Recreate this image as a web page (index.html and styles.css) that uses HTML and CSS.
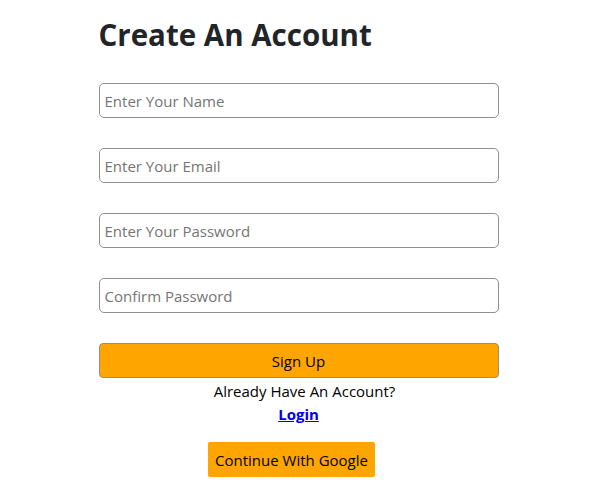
FILE: index.html
```html
<!DOCTYPE html>
<html>
<head>
<meta charset="utf-8">
<link rel="stylesheet" href="styles.css">
</head>
<body>
<main class="form">
  <h1 class="title">Create An Account</h1>
  <input class="field" type="text" placeholder="Enter Your Name">
  <input class="field" type="email" placeholder="Enter Your Email">
  <input class="field" type="password" placeholder="Enter Your Password">
  <input class="field" type="password" placeholder="Confirm Password">
  <button class="signup">Sign Up</button>
  <p class="have">Already Have An Account?</p>
  <a class="login" href="#">Login</a>
  <button class="google">Continue With Google</button>
</main>
</body>
</html>
```
FILE: styles.css
```css
body {
  margin: 0;
  background: #fff;
  font-family: "Open Sans", "Noto Sans", sans-serif;
  color: #212529;
}
.form {
  width: 400px;
  margin: 0 auto;
  padding-left: 1px;
  display: flex;
  flex-direction: column;
  align-items: center;
}
.title {
  align-self: flex-start;
  margin: 15px 0 28px;
  font-size: 29.5px;
  font-weight: 700;
  line-height: 40px;
  color: #212529;
}
.field {
  box-sizing: border-box;
  width: 400px;
  height: 35px;
  margin: 0 0 30px;
  padding: 0 5px;
  border: 1px solid #8f8f8f;
  border-radius: 5px;
  font-family: inherit;
  font-size: 15px;
  color: #212529;
}
.field::placeholder {
  color: #757575;
}
.signup {
  box-sizing: border-box;
  width: 400px;
  height: 35px;
  margin: 0;
  border: 1px solid #8f8f8f;
  border-radius: 4px;
  background: #ffa500;
  font-family: inherit;
  font-size: 15px;
  color: #000;
}
.have {
  margin: 2px 0 0 12px;
  font-size: 15px;
  line-height: 22px;
  color: #000;
}
.login {
  margin-top: 1px;
  font-size: 15px;
  font-weight: 700;
  line-height: 22px;
  color: #0000ee;
}
.google {
  margin: 17px 0 0 -14px;
  height: 35px;
  padding: 0 7px;
  border: none;
  border-radius: 2px;
  background: #ffa500;
  font-family: inherit;
  font-size: 15px;
  color: #000;
}
```
